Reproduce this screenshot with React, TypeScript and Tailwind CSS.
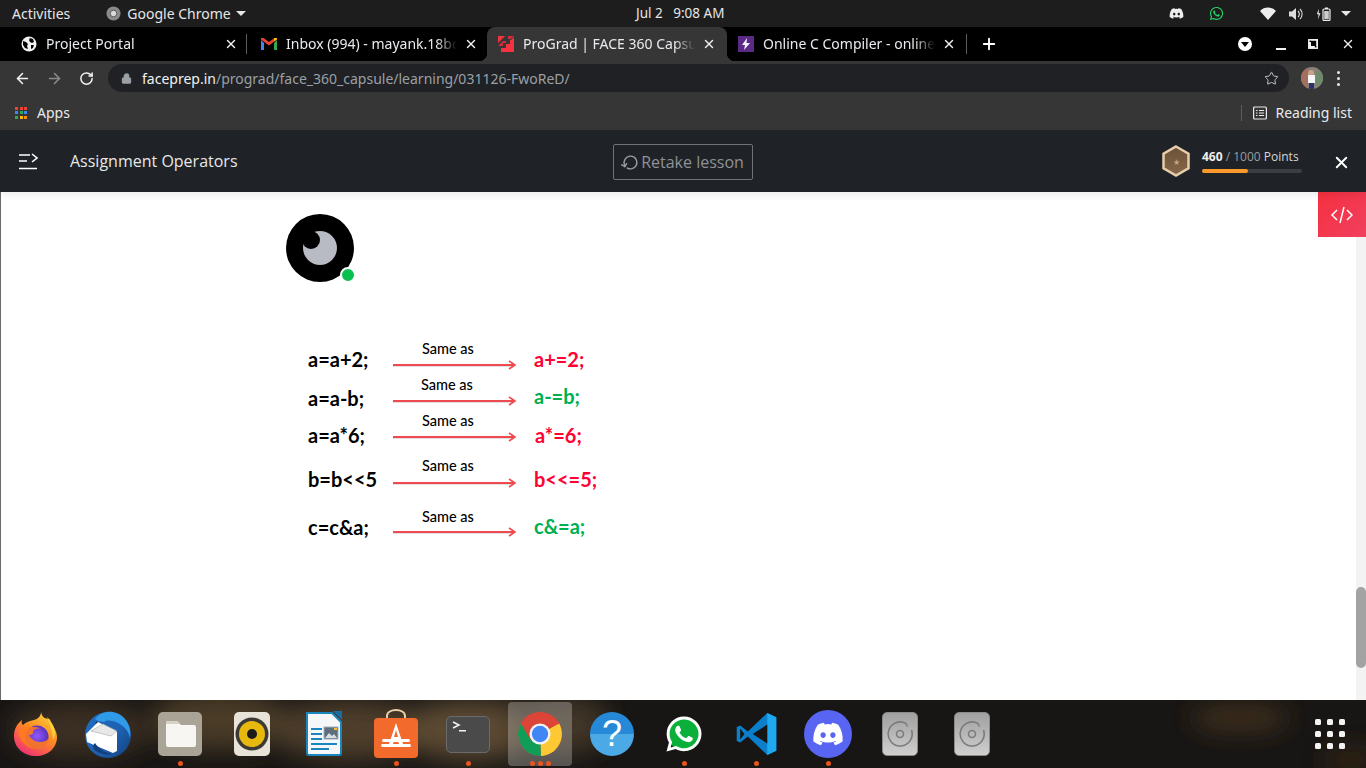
import React from "react";
import { FaDiscord, FaWhatsapp } from "react-icons/fa";
import { ArrowLeft, ArrowRight, RotateCw, Lock, Star, X, Plus, Minus, RotateCcw } from "lucide-react";

const uiFont = "font-['Noto_Sans','Open_Sans',sans-serif]";

function Tab({ icon, title, active, sep, wide }: { icon: React.ReactNode; title: string; active?: boolean; sep?: boolean; wide?: boolean }) {
  return (
    <div className={`relative flex h-[34px] items-center ${wide ? "w-[240px] pl-[14px] pr-[8px]" : "w-[240px] pl-[11px] pr-[10px]"} ${active ? "rounded-t-[8px] bg-[#363636]" : ""}`}>
      {active && <div className="absolute bottom-0 left-[-8px] h-[8px] w-[8px] bg-[radial-gradient(circle_at_0_0,transparent_8px,#363636_8.5px)]" />}
      {active && <div className="absolute bottom-0 right-[-8px] h-[8px] w-[8px] bg-[radial-gradient(circle_at_100%_0,transparent_8px,#363636_8.5px)]" />}
      <div className="flex w-[16px] shrink-0 items-center justify-center">{icon}</div>
      <span className="ml-[9px] flex-1 overflow-hidden whitespace-nowrap text-[14px] leading-[34px] text-[#e8eaed] [mask-image:linear-gradient(to_right,black_88%,transparent)]">
        {title}
      </span>
      <X size={14} strokeWidth={2.4} className="ml-[7px] mr-[1px] shrink-0 text-[#f0f0f0]" />
      {sep && <div className="absolute right-0 top-[7px] h-[20px] w-px bg-[#5c5c5c]" />}
    </div>
  );
}

const Globe = () => (
  <svg width="16" height="16" viewBox="0 0 16 16">
    <circle cx="8" cy="8" r="7.5" fill="#f1f1f1" />
    <path d="M2 5l3 1 2 2-1 2 1 3-3-1-2-3zM9 2l3 1 1 3-2 1-2-1-1-2zM10 9l3 0-1 3-2 1z" fill="#000" />
  </svg>
);
const Gmail = () => (
  <svg width="16" height="12" viewBox="0 0 16 12">
    <path d="M0 2v10h3V5z" fill="#4285f4" />
    <path d="M16 2v10h-3V5z" fill="#34a853" />
    <path d="M0 1.5L8 7.5l8-6V0h-2.5L8 4 2.500 0H0z" fill="#ea4335" />
    <path d="M13 3.300L16 1.500V0h-2.500L13 .4z" fill="#fbbc04" />
  </svg>
);
const Prograd = () => (
  <svg width="16" height="16" viewBox="0 0 16 16">
    <path d="M0 0h7L0 7zM16 1v15H3v-4h5V8h4V4h1z" fill="#f5333f" />
    <path d="M10 0h6l-3 3h-3zM0 10l5-5h3v2H5v3H2z" fill="#d42a3a" />
  </svg>
);
const Bolt = () => (
  <div className="flex h-[16px] w-[16px] items-center justify-center bg-[#5b2a86]">
    <svg width="10" height="12" viewBox="0 0 10 12"><path d="M6 0L1 7h3l-1 5 6-7H5.500z" fill="#f3f0f7" /></svg>
  </div>
);

function FirefoxIcon() {
  return (
    <svg width="46" height="46" viewBox="0 0 46 46">
      <defs>
        <linearGradient id="ff" x1="0.8" y1="0" x2="0.2" y2="1">
          <stop offset="0" stopColor="#ffd13a" /><stop offset="0.45" stopColor="#ff8a22" /><stop offset="1" stopColor="#ee2a7b" />
        </linearGradient>
        <radialGradient id="ffp" cx="0.5" cy="0.45" r="0.6">
          <stop offset="0" stopColor="#9059ff" /><stop offset="1" stopColor="#4b2aa8" />
        </radialGradient>
      </defs>
      <path d="M28 1c1 5 4 7 8 7 2 1 1 3 2 5 3 3 6 8 6 13 0 11-9 19-21 19C11 45 1 37 1 25 1 17 5 12 9 9c-1 3 0 4 1 5 3-3 7-4 11-5 4-1 7-4 7-8z" fill="url(#ff)" />
      <circle cx="24" cy="26" r="11.500" fill="url(#ffp)" />
      <path d="M6 19c4-3 9-3 13-3 3 0 6 0 9 2-4-1-6 0-8 2 1 2-1 4-4 4 2 4 6 7 11 7 4 0 8-2 10-5-1 8-8 13-15 12C13 37 5 29 6 19z" fill="#ff7a1f" opacity=".9" />
      <path d="M34 6c4 4 8 10 8 16 0 3-1 5-2 7 0-7-3-15-6-23z" fill="#ffcf3a" />
    </svg>
  );
}

function ThunderIcon() {
  return (
    <svg width="50" height="50" viewBox="0 0 50 50">
      <defs>
        <linearGradient id="tb" x1="0" y1="0" x2="1" y2="1">
          <stop offset="0" stopColor="#1f6fc4" /><stop offset="0.6" stopColor="#1d5fae" /><stop offset="1" stopColor="#123f7c" />
        </linearGradient>
      </defs>
      <circle cx="25" cy="26" r="23" fill="url(#tb)" />
      <path d="M12 10C20 0 34 1 42 10c5 6 6 13 5 19-2-8-6-12-12-15-6-3-12-3-14-1-3-1-6 0-9-3z" fill="#2f9be8" />
      <circle cx="14" cy="14" r="1.500" fill="#0b2a55" />
      <path d="M3 25l12-12 19 10v19l-4 2L4 33z" fill="#fff" />
      <path d="M8 22l20 5 6-5-14-7z" fill="#e8e8e8" stroke="#999" strokeWidth=".5" />
      <path d="M12 34c4 6 10 10 17 11-5 1-12 0-16-3-3-2-4-5-1-8z" fill="#123f7c" />
    </svg>
  );
}

function FilesIcon() {
  return (
    <div className="flex h-[44px] w-[44px] items-center justify-center rounded-[5px] bg-[#a9a496]">
      <svg width="32" height="28" viewBox="0 0 32 28">
        <path d="M2 3a2 2 0 012-2h9l4 4h13a2 2 0 012 2v18a2 2 0 01-2 2H4a2 2 0 01-2-2z" fill="#f7f6f3" />
        <path d="M2 3a2 2 0 012-2h9l3 3H2z" fill="#d6d2c8" />
      </svg>
    </div>
  );
}

function RhythmIcon() {
  return (
    <div className="flex h-[44px] w-[36px] items-center justify-center rounded-[5px] bg-[#e7e3d8]">
      <svg width="34" height="34" viewBox="0 0 34 34">
        <circle cx="17" cy="17" r="16.500" fill="#3d3a36" />
        <circle cx="17" cy="17" r="13" fill="#e7b90f" />
        <circle cx="17" cy="17" r="5" fill="#1b1b1b" />
      </svg>
    </div>
  );
}

function WriterIcon() {
  return (
    <svg width="38" height="46" viewBox="0 0 38 46">
      <path d="M2 2h25l9 9v31a2 2 0 01-2 2H4a2 2 0 01-2-2z" fill="#f5f7f8" stroke="#1a86c0" strokeWidth="2" />
      <path d="M28 0h9v9z" fill="#176ea8" />
      <g fill="#1a86c0">
        <rect x="6" y="17" width="11" height="2" /><rect x="6" y="22" width="11" height="2" /><rect x="6" y="27" width="11" height="2" />
        <rect x="6" y="32" width="26" height="2" /><rect x="6" y="37" width="18" height="2" />
      </g>
      <rect x="19" y="16" width="14" height="12" fill="#5d6f7b" stroke="#9fb2bc" />
      <path d="M20 27l4-5 3 3 2-2 3 4z" fill="#d8e0e4" />
      <rect x="29" y="17" width="3" height="2" fill="#f2c230" />
    </svg>
  );
}

function SoftwareIcon() {
  return (
    <svg width="46" height="50" viewBox="0 0 46 50">
      <path d="M14 10V7c0-8 18-8 18 0v3" fill="none" stroke="#e9cfa8" strokeWidth="2" />
      <rect x="1" y="9" width="44" height="40" rx="4" fill="#f26a2c" />
      <path d="M23 14l-8 24h4l2-6h4l2 6h4zM23 21l2 7h-4z" fill="#fff" />
      <rect x="9" y="30" width="28" height="3" rx="1.500" fill="#fff" />
      <rect x="8" y="35" width="30" height="3" rx="1.500" fill="#fff" />
    </svg>
  );
}

function TerminalIcon() {
  return (
    <div className="relative h-[37px] w-[44px] rounded-[5px] border border-[#6b6b6b] bg-[#4a4a4a]">
      <svg width="44" height="37" viewBox="0 0 44 37" className="absolute left-[-1px] top-[-1px]">
        <path d="M7 6l6 3-6 3" fill="none" stroke="#f2f2f2" strokeWidth="1.500" />
        <rect x="13" y="14" width="7" height="1.500" fill="#f2f2f2" />
      </svg>
    </div>
  );
}

function ChromeIcon() {
  return (
    <svg width="46" height="46" viewBox="0 0 48 48">
      <circle cx="24" cy="24" r="23" fill="#db4437" />
      <path d="M24 24L44 13a23 23 0 01-19 34z" fill="#fcc934" />
      <path d="M24 24L4 13a23 23 0 0021 34z" fill="#0f9d58" />
      <path d="M24 13h20a23 23 0 00-40 0l10 17z" fill="#db4437" />
      <circle cx="24" cy="24" r="11" fill="#f3f3f3" />
      <circle cx="24" cy="24" r="8.500" fill="#4285f4" />
    </svg>
  );
}

function HelpIcon() {
  return (
    <div className="flex h-[44px] w-[44px] items-center justify-center rounded-full bg-[linear-gradient(to_bottom,#2589d8_0%,#2589d8_50%,#4ba9e6_50%,#4ba9e6_100%)] font-['Liberation_Sans',sans-serif] text-[36px] leading-none text-white">
      ?
    </div>
  );
}

function WhatsappIcon() {
  return (
    <div className="relative flex h-[40px] w-[40px] items-center justify-center">
      <div className="absolute h-[33px] w-[33px] rounded-full bg-[#0bb03b]" />
      <FaWhatsapp size={40} className="relative text-white" />
    </div>
  );
}

function VscodeIcon() {
  return (
    <svg width="43" height="44" viewBox="0 0 100 100">
      <path d="M96 11L75 1 30 44 12 30l-8 4 0 32 8 4 18-14 45 43 21-10z" fill="#0b7fcb" />
      <path d="M4 33l8-3 63 59-0 10-21-10z" fill="#0f6fb3" opacity="0" />
      <path d="M75 1l21 10v78l-21 10z" fill="#1fa9f0" />
      <path d="M75 28L41 50l34 22z" fill="#181614" />
      <path d="M12 37l10 13-10 13z" fill="#181614" />
    </svg>
  );
}

function DiscordIcon() {
  return (
    <div className="flex h-[48px] w-[48px] items-center justify-center rounded-full bg-[#5865f2]">
      <FaDiscord size={32} className="text-white" />
    </div>
  );
}

function DiscIcon() {
  return (
    <div className="flex h-[44px] w-[36px] items-center justify-center rounded-[5px] border border-[#8a8a8a] bg-[linear-gradient(to_bottom,#a0a0a0,#cfcfcf)]">
      <svg width="28" height="28" viewBox="0 0 28 28" fill="none" stroke="#7b7b7b" strokeWidth="1.600">
        <path d="M20 3.500A12 12 0 1025.500 10" />
        <path d="M20 3.500l1.500 3" />
        <circle cx="14" cy="14" r="3.500" />
      </svg>
    </div>
  );
}

type RowT = { left: string; right: string; green?: boolean; leftPad: string; rightPad: string; arrowGap: string; sameX: string; rightX: string; height: string };
const rows: RowT[] = [
  { left: "a=a+2;", right: "a+=2;", leftPad: "pt-[4px]", rightPad: "pt-[4px]", arrowGap: "mt-[3px]", sameX: "ml-[29px]", rightX: "ml-0", height: "h-[36px]" },
  { left: "a=a-b;", right: "a-=b;", green: true, leftPad: "pt-[7px]", rightPad: "pt-[5px]", arrowGap: "mt-[3px]", sameX: "ml-[28px]", rightX: "ml-0", height: "h-[36px]" },
  { left: "a=a*6;", right: "a*=6;", leftPad: "pt-[8px]", rightPad: "pt-[8px]", arrowGap: "mt-[3px]", sameX: "ml-[29px]", rightX: "ml-px", height: "h-[45px]" },
  { left: "b=b<<5", right: "b<<=5;", leftPad: "pt-[7px]", rightPad: "pt-[7px]", arrowGap: "mt-[4px]", sameX: "ml-[29px]", rightX: "ml-0", height: "h-[51px]" },
  { left: "c=c&a;", right: "c&=a;", green: true, leftPad: "pt-[4px]", rightPad: "pt-[3px]", arrowGap: "mt-[2px]", sameX: "ml-[29px]", rightX: "ml-0", height: "h-[40px]" },
];

const Arrow = () => (
  <svg width="124" height="10" viewBox="0 0 124 10" className="block">
    <path d="M0 6h120" stroke="#bbb" strokeWidth="1.500" opacity=".6" />
    <path d="M0 5h122" stroke="#ef4a50" strokeWidth="2" />
    <path d="M116 1l6 4-6 4" fill="none" stroke="#ef4a50" strokeWidth="1.600" />
  </svg>
);

function Dock() {
  const items: { el: React.ReactNode; dots?: number }[] = [
    { el: <FirefoxIcon /> },
    { el: <ThunderIcon /> },
    { el: <FilesIcon />, dots: 1 },
    { el: <RhythmIcon /> },
    { el: <WriterIcon /> },
    { el: <SoftwareIcon />, dots: 1 },
    { el: <TerminalIcon />, dots: 1 },
    { el: <ChromeIcon />, dots: 3 },
    { el: <HelpIcon /> },
    { el: <WhatsappIcon />, dots: 1 },
    { el: <VscodeIcon />, dots: 1 },
    { el: <DiscordIcon />, dots: 1 },
    { el: <DiscIcon /> },
    { el: <DiscIcon /> },
  ];
  return (
    <div className="relative flex h-[68px] overflow-hidden bg-[#181614]">
      <svg className="absolute inset-0" width="1366" height="68" viewBox="0 0 1366 68">
        <defs>
          <filter id="blurA"><feGaussianBlur stdDeviation="12" /></filter>
        </defs>
        <g filter="url(#blurA)">
          <ellipse cx="80" cy="30" rx="70" ry="28" fill="#3a2e20" />
          <ellipse cx="220" cy="20" rx="70" ry="30" fill="#4a3a28" />
          <ellipse cx="350" cy="30" rx="80" ry="30" fill="#4e3e2a" />
          <ellipse cx="470" cy="30" rx="70" ry="30" fill="#5b4a33" />
          <ellipse cx="560" cy="25" rx="50" ry="30" fill="#3f3528" />
          <ellipse cx="1240" cy="18" rx="50" ry="14" fill="#3e2f1c" />
          <ellipse cx="1350" cy="60" rx="30" ry="14" fill="#2e2116" />
        </g>
      </svg>
      {items.map((it, i) => (
        <div key={i} className="relative flex h-[68px] w-[72px] items-center justify-center">
          {it.dots === 3 && <div className="absolute left-[4px] top-[2px] h-[64px] w-[64px] rounded-[4px] bg-white/25" />}
          <div className="relative">{it.el}</div>
          {it.dots && (
            <div className="absolute bottom-[2px] flex gap-[3px]">
              {Array.from({ length: it.dots }).map((_, d) => (
                <div key={d} className="h-[5px] w-[5px] rounded-full bg-[#e95420]" />
              ))}
            </div>
          )}
        </div>
      ))}
      <div className="relative ml-auto flex h-[68px] w-[72px] items-center justify-center">
        <div className="grid grid-cols-3 gap-[6px]">
          {Array.from({ length: 9 }).map((_, i) => (
            <div key={i} className="h-[6px] w-[6px] rounded-[1.5px] bg-[#f2f2f2]" />
          ))}
        </div>
      </div>
    </div>
  );
}

export default function App() {
  return (
    <div className={`flex h-[768px] w-[1366px] flex-col overflow-hidden bg-white ${uiFont}`}>
      {/* GNOME top bar */}
      <div className="relative flex h-[27px] shrink-0 items-center bg-[#1d1d1d] text-[14px] text-[#e6e6e6]">
        <span className="ml-[12px]">Activities</span>
        <svg width="15" height="15" viewBox="0 0 16 16" className="ml-[36px]">
          <circle cx="8" cy="8" r="7.500" fill="#8a8a8a" />
          <circle cx="8" cy="8" r="3.500" fill="#d9d9d9" stroke="#555" />
        </svg>
        <span className="ml-[6px]">Google Chrome</span>
        <div className="ml-[5px] h-0 w-0 border-x-[5px] border-t-[5px] border-x-transparent border-t-[#e6e6e6]" />
        <div className="absolute left-[636px] whitespace-pre text-[13.5px]">Jul 2   9:08 AM</div>
        <div className="ml-auto flex items-center">
          <FaDiscord size={15} className="mr-[25px] text-[#eee]" />
          <FaWhatsapp size={15} className="mr-[36px] text-[#25d366]" />
          <svg width="16" height="13" viewBox="0 0 16 13" className="mr-[12px]"><path d="M0 4a11 11 0 0116 0L8 13z" fill="#eee" /></svg>
          <svg width="16" height="16" viewBox="0 0 16 16" className="mr-[12px]" fill="none"><path d="M1 5.500h3L8 2v12l-4-3.500H1z" fill="#ddd" /><path d="M10 5a4 4 0 010 6M12 3a7 7 0 010 10" stroke="#ddd" strokeWidth="1.100" /></svg>
          <svg width="16" height="16" viewBox="0 0 16 16" className="mr-[9px]" fill="none"><path d="M3 2L1 8h2l-1 6 3-7H3z" fill="#eee" transform="translate(0 1) scale(.9)" /><rect x="7" y="3" width="7" height="11.500" rx="1" stroke="#eee" strokeWidth="1.200" /><rect x="9" y="1.500" width="3" height="1.500" fill="#eee" /><rect x="8.200" y="5" width="4.600" height="8.300" fill="#ccc" /></svg>
          <div className="mr-[15px] h-0 w-0 border-x-[5px] border-t-[5px] border-x-transparent border-t-[#e6e6e6]" />
        </div>
      </div>

      {/* tab strip */}
      <div className="relative flex h-[34px] shrink-0 items-center bg-black pl-[7px]">
        <Tab icon={<Globe />} title="Project Portal" sep wide />
        <Tab icon={<Gmail />} title="Inbox (994) - mayank.18bcs1234@gmail.com" wide />
        <Tab icon={<Prograd />} title="ProGrad | FACE 360 Capsule" active />
        <Tab icon={<Bolt />} title="Online C Compiler - online editor" sep />
        <Plus size={18} strokeWidth={2.5} className="ml-[13px] text-white" />
        <div className="ml-auto flex items-center text-white">
          <div className="mr-[24px] flex h-[14px] w-[14px] items-center justify-center rounded-full bg-white">
            <div className="h-0 w-0 border-x-[4px] border-t-[5px] border-x-transparent border-t-black" />
          </div>
          <div className="mr-[22px] mt-[9px] h-[2px] w-[10px] bg-[#f0f0f0]" />
          <svg width="10" height="10" viewBox="0 0 10 10" fill="none" stroke="#f0f0f0" strokeWidth="1.500" className="mr-[23px]"><path d="M3 .8h6.200V7" /><rect x=".8" y="3" width="6" height="6" fill="#f0f0f0" stroke="none" /><rect x="3" y="3" width="4.500" height="4" fill="#000" stroke="none" /><rect x=".8" y=".8" width="8.400" height="8.400" /></svg>
          <X size={14} strokeWidth={2.4} className="mr-[11px] text-[#f0f0f0]" />
        </div>
      </div>

      {/* toolbar */}
      <div className="flex h-[34px] shrink-0 items-center bg-[#363636]">
        <ArrowLeft size={17} strokeWidth={2.2} className="ml-[14px] text-[#f1f1f1]" />
        <ArrowRight size={17} strokeWidth={2.2} className="ml-[15px] text-[#8a8a8a]" />
        <RotateCw size={15} strokeWidth={2.4} className="ml-[16px] text-[#f1f1f1]" />
        <div className="ml-[14px] flex h-[28px] w-[1181px] items-center rounded-full bg-[#202124]">
          <Lock size={11} fill="#9aa0a6" strokeWidth={2.4} className="ml-[13px] text-[#9aa0a6]" />
          <span className="ml-[10px] text-[14px] text-[#9aa0a6]">
            <span className="text-[#f1f1f1]">faceprep.in</span>/prograd/face_360_capsule/learning/031126-FwoReD/
          </span>
          <Star size={15} strokeWidth={1.6} className="ml-auto mr-[10px] text-[#c8c8c8]" />
        </div>
        <svg width="22" height="22" viewBox="0 0 22 22" className="ml-[12px]">
          <clipPath id="av"><circle cx="11" cy="11" r="11" /></clipPath>
          <g clipPath="url(#av)">
            <rect width="22" height="22" fill="#8a8078" />
            <rect x="0" y="0" width="7" height="22" fill="#a3705f" />
            <rect x="15" y="4" width="7" height="14" fill="#6d8a6b" />
            <circle cx="10" cy="6" r="3" fill="#caa48a" />
            <rect x="7" y="8" width="7" height="8" fill="#f5f5f5" />
            <rect x="8" y="16" width="5" height="6" fill="#2b2f6b" />
          </g>
        </svg>
        <div className="ml-[14px] flex flex-col gap-[3px]">
          <div className="h-[3px] w-[3px] rounded-full bg-[#e8e8e8]" />
          <div className="h-[3px] w-[3px] rounded-full bg-[#e8e8e8]" />
          <div className="h-[3px] w-[3px] rounded-full bg-[#e8e8e8]" />
        </div>
      </div>

      {/* bookmarks */}
      <div className="flex h-[35px] shrink-0 items-center bg-[#363636] text-[14px] text-[#e8eaed]">
        <div className="ml-[15px] grid grid-cols-3 gap-[1.5px]">
          {["bg-[#ea4335]", "bg-[#ea4335]", "bg-[#ea4335]", "bg-[#4285f4]", "bg-[#34a853]", "bg-[#4285f4]", "bg-[#34a853]", "bg-[#fbbc04]", "bg-[#fb8c00]"].map((c, i) => (
            <div key={i} className={`h-[3px] w-[3px] ${c}`} />
          ))}
        </div>
        <span className="ml-[10px]">Apps</span>
        <div className="ml-auto h-[16px] w-px bg-[#5c5c5c]" />
        <svg width="14" height="14" viewBox="0 0 14 14" fill="none" stroke="#e8eaed" strokeWidth="1.200" className="ml-[11px]">
          <rect x=".6" y="1" width="12.800" height="12" rx="1" />
          <path d="M3 4.500h1.500M6 4.500h5M3 7h1.500M6 7h5M3 9.500h1.500M6 9.500h5" />
        </svg>
        <span className="ml-[8px] mr-[14px]">Reading list</span>
      </div>

      {/* app header */}
      <div className="relative z-10 flex h-[62px] shrink-0 items-center bg-[#1f2226] font-['Open_Sans',sans-serif] shadow-[0_3px_8px_rgba(0,0,0,0.08)]">
        <svg width="19" height="17" viewBox="0 0 19 17" className="ml-[19px]" fill="none" stroke="#fff" strokeWidth="1.600">
          <path d="M0 2h11M0 8h8M0 15.500h18M13 1l5 4-5 4" />
        </svg>
        <span className="ml-[32px] text-[16px] text-[#e8e8e8]">Assignment Operators</span>
        <div className="absolute left-[613px] top-[14px] flex h-[36px] w-[140px] items-center justify-center rounded-[2px] border border-[#6f7276] text-[16px] text-[#8f9296]">
          <RotateCw size={17} strokeWidth={2} className="mr-[2px] -scale-x-100 rotate-[-60deg] text-[#9a9da1]" />
          Retake lesson
        </div>
        <div className="ml-auto flex items-center">
          <svg width="28" height="32" viewBox="0 0 28 32" className="mr-[12px]">
            <defs>
              <linearGradient id="hx" x1="0" y1="0" x2="0" y2="1"><stop offset="0" stopColor="#6b5138" /><stop offset="1" stopColor="#86684a" /></linearGradient>
            </defs>
            <path d="M14 1.500L26.500 8.700v14.600L14 30.500 1.500 23.300V8.700z" fill="url(#hx)" stroke="#e8cdaa" strokeWidth="2.500" />
            <text x="14" y="20" fontSize="8" textAnchor="middle" fill="#c9a57c">★</text>
          </svg>
          <div className="mr-[63px] flex w-[101px] flex-col">
            <span className="text-[12px] leading-[16px] text-[#9a9da1]">
              <span className="font-bold text-[#eeeeee]">460</span> / 1000 <span className="text-[#d8d8d8]">Points</span>
            </span>
            <div className="mt-[4px] h-[4px] w-[100px] rounded-full bg-[#3b3e43]">
              <div className="h-[4px] w-[46px] rounded-full bg-[#fb9a2c]" />
            </div>
          </div>
        </div>
        <X size={19} strokeWidth={2.4} className="absolute left-[1332px] top-[23px] text-white" />
      </div>

      {/* content */}
      <div className="relative flex h-[508px] shrink-0 border-l border-[#6a6a6a] bg-white">
        <div className="flex-1 pl-[285px] pt-[22px]">
          <div className="relative h-[68px] w-[68px] rounded-full bg-black">
            <svg width="68" height="68" viewBox="0 0 68 68" className="absolute inset-0">
              <circle cx="34" cy="34" r="17" fill="#b8bac4" />
              <circle cx="25" cy="26" r="9" fill="#000" />
            </svg>
            <div className="absolute bottom-[-1px] right-[-2px] h-[16px] w-[16px] rounded-full border-[2px] border-white bg-[#08c050]" />
          </div>
          <div className="ml-[22px] mt-[59px] flex flex-col font-['Lato',sans-serif]">
            {rows.map((r) => (
              <div key={r.left} className={`flex ${r.height}`}>
                <div className={`w-[85px] shrink-0 text-[20px] font-bold leading-[28px] text-black ${r.leftPad}`}>{r.left}</div>
                <div className="flex w-[141px] shrink-0 flex-col">
                  <span className={`whitespace-nowrap text-[14.500px] font-medium leading-[16px] text-black ${r.sameX}`}>Same as</span>
                  <div className={r.arrowGap}><Arrow /></div>
                </div>
                <div className={`text-[20px] font-bold leading-[28px] ${r.green ? "text-[#00b050]" : "text-[#ff0033]"} ${r.leftPad === r.rightPad ? r.rightPad : r.rightPad} ${r.rightX}`}>{r.right}</div>
              </div>
            ))}
          </div>
        </div>
        <div className="w-[10px] shrink-0 bg-[#f3f3f3] pt-[395px]">
          <div className="h-[81px] w-[10px] rounded-full bg-[#a3a3a3]" />
        </div>
        <div className="absolute right-0 top-0 flex h-[45px] w-[48px] items-center justify-center bg-[linear-gradient(135deg,#f5303f,#f1405f)]">
          <svg width="22" height="18" viewBox="0 0 22 18" fill="none" stroke="#fff" strokeWidth="1.500">
            <path d="M6 4L1 9l5 5M16 4l5 5-5 5M13 1L9 17" />
          </svg>
        </div>
      </div>

      <Dock />
    </div>
  );
}
